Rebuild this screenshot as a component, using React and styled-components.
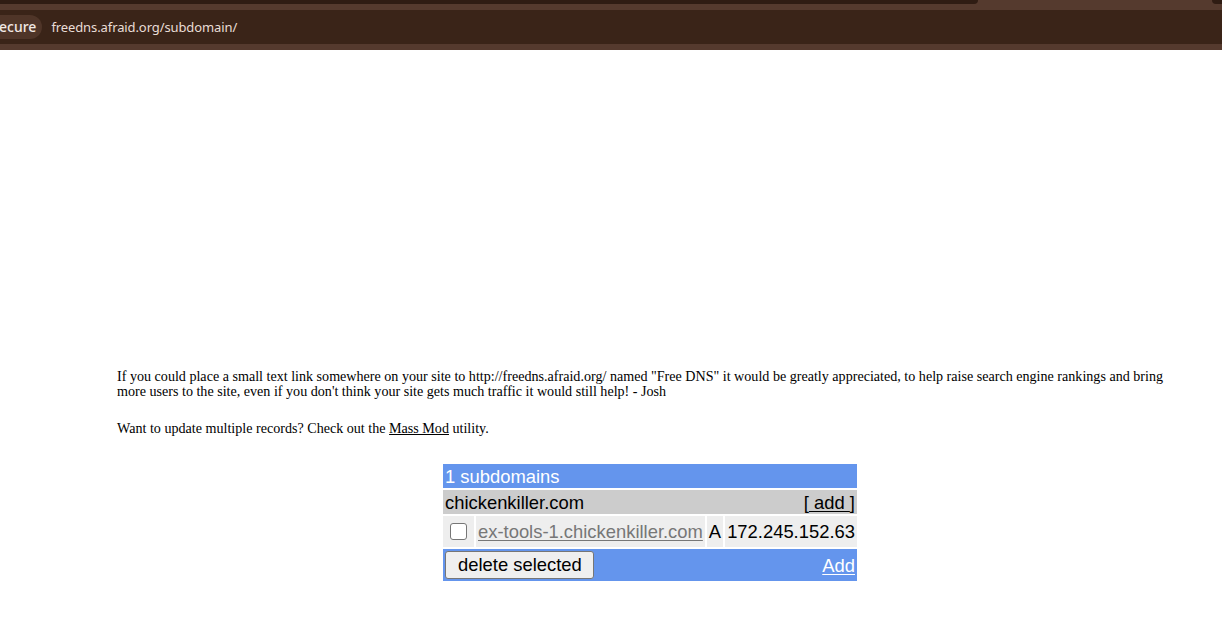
import React from 'react'
import styled, { createGlobalStyle } from 'styled-components'

const GlobalStyle = createGlobalStyle`
  html, body {
    margin: 0;
    padding: 0;
    background: #fff;
  }
`

const ChromeBar = styled.div`
  height: 50px;
  background: #553a2e;
  display: flex;
  flex-direction: column;
`

const TabStrip = styled.div`
  height: 10px;
  display: flex;
  justify-content: space-between;
  align-items: flex-start;
`

const ActiveTab = styled.div`
  width: 978px;
  height: 4px;
  background: #2f1c13;
  border-bottom-right-radius: 6px;
`

const EdgeTab = styled.div`
  width: 10px;
  height: 4px;
  background: #2f1c13;
  border-bottom-left-radius: 6px;
`

const Toolbar = styled.div`
  height: 34px;
  background: #3a2418;
  display: flex;
  align-items: center;
  gap: 9px;
  font-family: 'Noto Sans', 'Open Sans', sans-serif;
`

const SecurePill = styled.span`
  background: #4f3528;
  color: #f2e9e4;
  font-size: 14px;
  font-weight: 500;
  height: 24px;
  line-height: 24px;
  padding: 0 6px 0 0;
  margin-left: -1px;
  border-radius: 0 12px 12px 0;
`

const Url = styled.span`
  color: #e9ddd6;
  font-size: 13px;
  letter-spacing: -0.1px;
`

const Page = styled.div`
  width: 1066px;
  margin-left: 117px;
  padding-top: 319px;
  font-family: 'Liberation Serif', 'Times New Roman', serif;
  font-size: 14.1px;
  line-height: 15px;
  color: #000;
`

const Para = styled.p`
  margin: 0 0 ${p => p.gap || 0}px;
`

const TextLink = styled.a`
  color: #000;
  text-decoration: underline;
`

const Table = styled.table`
  margin: 26px auto 0;
  border-spacing: 2px;
  font-family: 'Liberation Sans', Arial, sans-serif;
  font-size: 18.4px;
`

const Cell = styled.td`
  padding: 0 2px;
  height: ${p => p.h || 24}px;
  background: ${p => p.bg || '#eee'};
  color: ${p => p.fg || '#000'};
  white-space: nowrap;
  vertical-align: middle;
`

const Split = styled.div`
  display: flex;
  justify-content: space-between;
  align-items: center;
`

const RowLink = styled.a`
  color: ${p => p.color || '#000'};
  text-decoration: underline;
  text-underline-offset: 2px;
`

const Check = styled.input`
  appearance: none;
  display: block;
  box-sizing: border-box;
  width: 17px;
  height: 17px;
  margin: 0 5px 0 5px;
  border: 1px solid #767676;
  border-radius: 3px;
  background: #fff;
`

const Button = styled.button`
  font-family: 'Liberation Sans', Arial, sans-serif;
  font-size: 18.4px;
  color: #000;
  background: #efefef;
  border: 1px solid #767676;
  border-radius: 3px;
  height: 28px;
  padding: 0 11px 0 12px;
`

export default function App() {
  return (
    <>
      <GlobalStyle />
      <ChromeBar>
        <TabStrip>
          <ActiveTab />
          <EdgeTab />
        </TabStrip>
        <Toolbar>
          <SecurePill>ecure</SecurePill>
          <Url>freedns.afraid.org/subdomain/</Url>
        </Toolbar>
      </ChromeBar>
      <Page>
        <Para gap={22}>
          If you could place a small text link somewhere on your site to http://freedns.afraid.org/ named "Free DNS" it would be greatly appreciated, to help raise search engine rankings and bring more users to the site, even if you don't think your site gets much traffic it would still help! - Josh
        </Para>
        <Para>
          Want to update multiple records? Check out the <TextLink href="#">Mass Mod</TextLink> utility.
        </Para>
        <Table>
          <tbody>
            <tr>
              <Cell colSpan={4} bg="#6495ed" fg="#fff">1 subdomains</Cell>
            </tr>
            <tr>
              <Cell colSpan={4} bg="#ccc">
                <Split>
                  <span>chickenkiller.com</span>
                  <span>[<RowLink href="#"> add </RowLink>]</span>
                </Split>
              </Cell>
            </tr>
            <tr>
              <Cell h={31}><Check type="checkbox" /></Cell>
              <Cell h={31}><RowLink href="#" color="#777">ex-tools-1.chickenkiller.com</RowLink></Cell>
              <Cell h={31}>A</Cell>
              <Cell h={31}>172.245.152.63</Cell>
            </tr>
            <tr>
              <Cell colSpan={4} h={32} bg="#6495ed">
                <Split>
                  <Button>delete selected</Button>
                  <RowLink href="#" color="#fff">Add</RowLink>
                </Split>
              </Cell>
            </tr>
          </tbody>
        </Table>
      </Page>
    </>
  )
}
